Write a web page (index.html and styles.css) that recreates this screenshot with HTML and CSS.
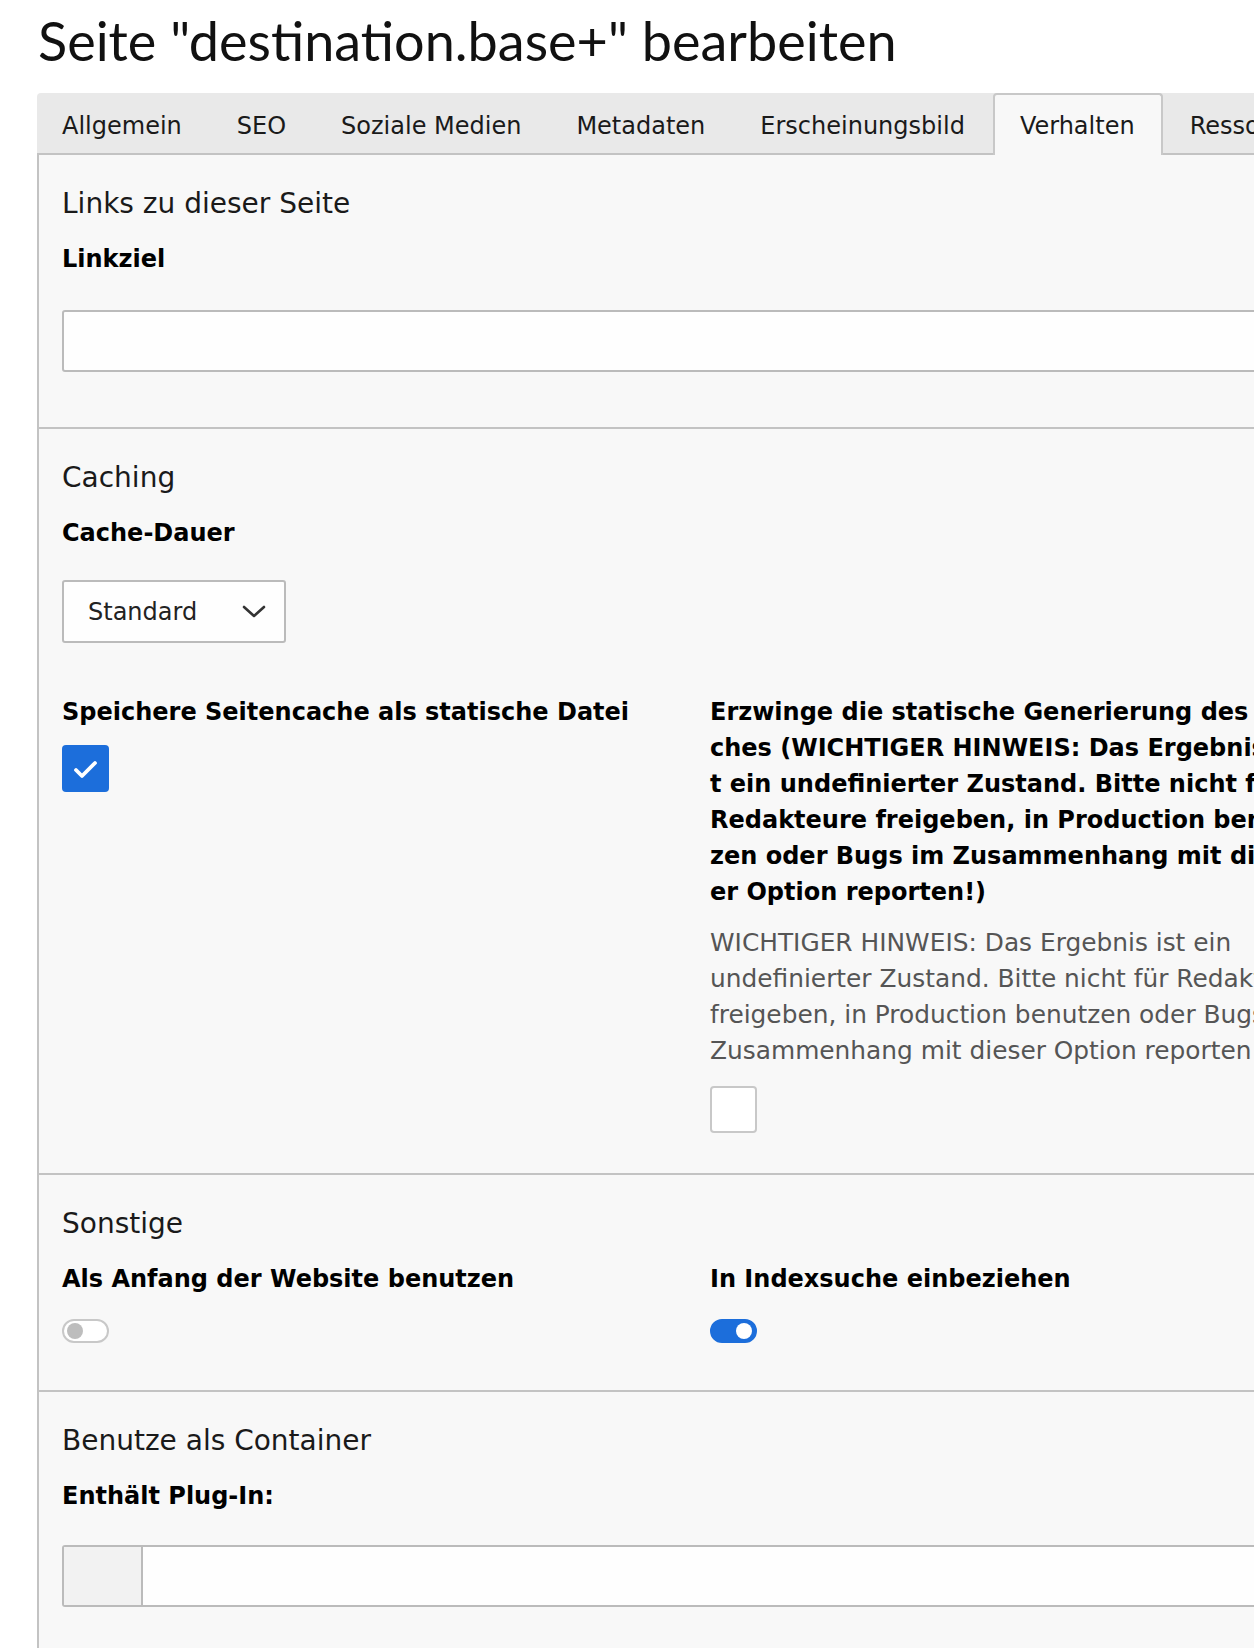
FILE: index.html
```html
<!DOCTYPE html>
<html lang="de">
<head>
    <meta charset="UTF-8">
    <title>Seite bearbeiten</title>
    <link rel="stylesheet" href="styles.css">
</head>
<body>
    <h1 class="page-title">Seite "destination.base+" bearbeiten</h1>

    <ul class="tabs">
        <li><a href="#">Allgemein</a></li>
        <li><a href="#">SEO</a></li>
        <li><a href="#">Soziale Medien</a></li>
        <li><a href="#">Metadaten</a></li>
        <li><a href="#">Erscheinungsbild</a></li>
        <li><a href="#" class="active">Verhalten</a></li>
        <li><a href="#">Ressourcen</a></li>
        <li><a href="#">Zugriff</a></li>
    </ul>

    <div class="panel">
        <!-- Links -->
        <div class="section section-links">
            <h2>Links zu dieser Seite</h2>
            <div class="field-label label-text">Linkziel</div>
            <div class="text-input"></div>
        </div>

        <!-- Caching -->
        <div class="section section-caching">
            <h2>Caching</h2>
            <div class="field-label label-text">Cache-Dauer</div>
            <div class="select">
                <span>Standard</span>
                <svg width="24" height="14" viewBox="0 0 24 14"><polyline points="2,2 12,11 22,2" fill="none" stroke="#333" stroke-width="2.6" stroke-linecap="round" stroke-linejoin="round"/></svg>
            </div>
            <div class="row">
                <div class="col">
                    <div class="field-label">Speichere Seitencache als statische Datei</div>
                    <div class="checkbox checked">
                        <svg width="47" height="47" viewBox="0 0 47 47"><polyline points="14,25 20,31 33,18" fill="none" stroke="#fff" stroke-width="3.8" stroke-linecap="round" stroke-linejoin="round"/></svg>
                    </div>
                </div>
                <div class="col">
                    <div class="field-label long-label">Erzwinge die statische Generierung des Caches (WICHTIGER HINWEIS: Das Ergebnis ist ein undefinierter Zustand. Bitte nicht für Redakteure freigeben, in Production benutzen oder Bugs im Zusammenhang mit dieser Option reporten!)</div>
                    <p class="help">WICHTIGER HINWEIS: Das Ergebnis ist ein undefinierter Zustand. Bitte nicht für Redakteure freigeben, in Production benutzen oder Bugs im Zusammenhang mit dieser Option reporten!</p>
                    <div class="checkbox"></div>
                </div>
            </div>
        </div>

        <!-- Sonstige -->
        <div class="section section-misc">
            <h2>Sonstige</h2>
            <div class="row">
                <div class="col">
                    <div class="field-label label-toggle">Als Anfang der Website benutzen</div>
                    <div class="toggle"><span class="knob"></span></div>
                </div>
                <div class="col">
                    <div class="field-label label-toggle">In Indexsuche einbeziehen</div>
                    <div class="toggle on"><span class="knob"></span></div>
                </div>
            </div>
        </div>

        <!-- Container -->
        <div class="section section-container">
            <h2>Benutze als Container</h2>
            <div class="field-label label-text">Enthält Plug-In:</div>
            <div class="input-group">
                <span class="addon"></span>
                <span class="group-input"></span>
            </div>
        </div>
    </div>
</body>
</html>
```

FILE: styles.css
```css
html, body {
    overflow: hidden;
}

body {
    margin: 0;
    padding: 0 0 0 37px;
    background-color: #ffffff;
    font-family: "DejaVu Sans", Verdana, sans-serif;
    color: #1a1a1a;
    width: 1500px;
}

.page-title {
    font-family: Lato, "Liberation Sans", sans-serif;
    font-weight: 400;
    font-size: 54px;
    line-height: 64px;
    margin: 0;
    padding: 9px 0 20px 1px;
    color: #111;
}

/* tab bar */
.tabs {
    display: flex;
    list-style: none;
    margin: 0;
    padding: 0;
    background-color: #e9e9e9;
    border-bottom: 2px solid #c3c3c3;
    border-top-left-radius: 4px;
    height: 60px;
}

.tabs li {
    display: flex;
}

.tabs a {
    display: flex;
    align-items: center;
    padding: 5px 27px 0 26px;
    border: 1px solid transparent;
    font-size: 24px;
    color: #1a1a1a;
    text-decoration: none;
    white-space: nowrap;
}

.tabs li:first-child a {
    padding-left: 24px;
}

.tabs a.active {
    background-color: #f8f8f8;
    border: 2px solid #c8c8c8;
    border-bottom: none;
    border-radius: 4px 4px 0 0;
    margin-bottom: -2px;
    padding: 2px 26px 0 25px;
}

/* panel */
.panel {
    background-color: #f8f8f8;
    border-left: 2px solid #c3c3c3;
    min-height: 1600px;
}

.section {
    padding: 31px 23px 0;
    border-bottom: 2px solid #c3c3c3;
}

.section h2 {
    font-size: 28px;
    font-weight: 400;
    line-height: 36px;
    margin: 0 0 19px;
    color: #1a1a1a;
}

.section-links { padding-bottom: 55px; }
.section-caching { padding-bottom: 40px; }
.section-misc { padding-bottom: 47px; }
.section-container { border-bottom: none; }

.field-label {
    font-size: 24px;
    font-weight: bold;
    line-height: 36px;
    color: #000;
    margin-bottom: 15px;
}

.label-text { margin-bottom: 31px; }
.section-links .label-text { margin-bottom: 33px; }
.label-toggle { margin-bottom: 22px; }

.long-label {
    max-width: 592px;
    word-break: break-all;
}

.text-input {
    height: 58px;
    border: 2px solid #bbbbbb;
    border-radius: 3px;
    background-color: #fefefe;
}

.select {
    display: flex;
    align-items: center;
    justify-content: space-between;
    box-sizing: border-box;
    width: 224px;
    height: 63px;
    margin-top: -2px;
    padding: 0 18px 0 24px;
    border: 2px solid #bbbbbb;
    border-radius: 3px;
    background-color: #fefefe;
    font-size: 24px;
    color: #222;
}

.row {
    display: grid;
    grid-template-columns: 624px 610px;
    column-gap: 24px;
}

.section-caching .row {
    margin-top: 51px;
}

.help {
    font-size: 24.85px;
    line-height: 36px;
    color: #555;
    margin: 0 0 17px;
}

.checkbox {
    width: 43px;
    height: 43px;
    border: 2px solid #c8c8c8;
    border-radius: 4px;
    background-color: #fff;
}

.checkbox.checked {
    width: 47px;
    height: 47px;
    border: none;
    background-color: #1c6edb;
}

.checkbox svg {
    display: block;
}

.toggle {
    position: relative;
    width: 43px;
    height: 20px;
    border: 2px solid #c8c8c8;
    border-radius: 12px;
    background-color: #fff;
}

.toggle .knob {
    position: absolute;
    top: 2px;
    left: 3px;
    width: 16px;
    height: 16px;
    border-radius: 50%;
    background-color: #bdbdbd;
}

.toggle.on {
    background-color: #1c6edb;
    border-color: #1c6edb;
}

.toggle.on .knob {
    left: auto;
    right: 3px;
    background-color: #fff;
}

.input-group {
    display: flex;
    height: 58px;
    border: 2px solid #bbbbbb;
    border-radius: 3px;
    background-color: #fefefe;
}

.addon {
    width: 77px;
    background-color: #f2f2f2;
    border-right: 2px solid #bbbbbb;
}

.group-input {
    flex: 1;
}
```
